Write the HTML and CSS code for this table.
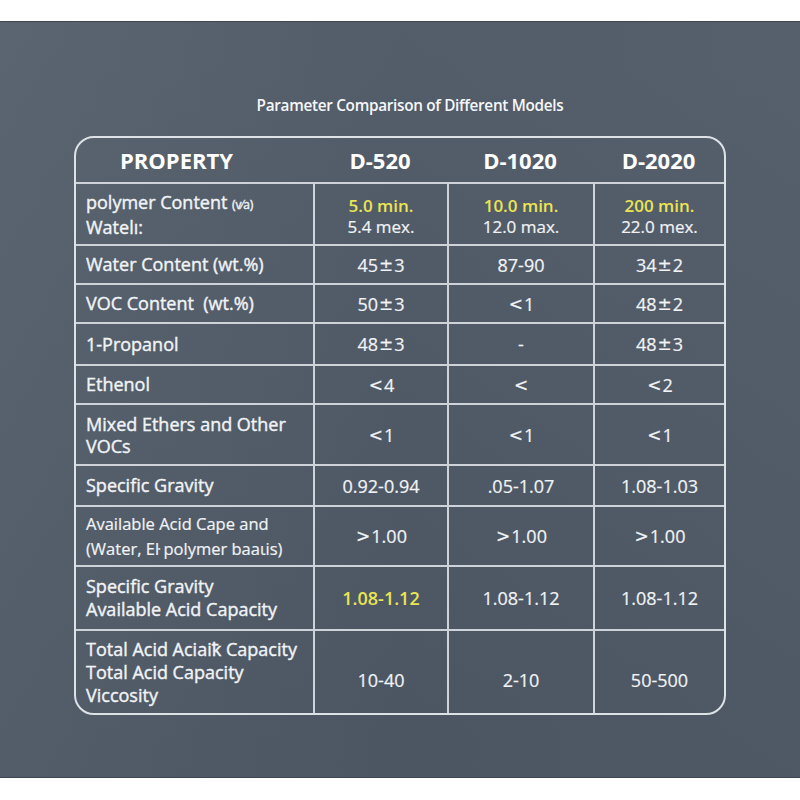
FILE: index.html
```html
<!DOCTYPE html>
<html lang="en">
<head>
<meta charset="utf-8">
<title>Parameter Comparison of Different Models</title>
<link rel="stylesheet" href="styles.css">
</head>
<body>
<main class="panel">
  <h1 class="title">Parameter Comparison of Different Models</h1>
  <div class="grid" role="table">
    <div class="cell head prop" role="columnheader">PROPERTY</div>
    <div class="cell head" role="columnheader">D-520</div>
    <div class="cell head" role="columnheader">D-1020</div>
    <div class="cell head" role="columnheader">D-2020</div>

    <div class="cell label row1"><span>polymer Content <span class="tiny">(v⁄a)</span></span><span>Watelı:</span></div>
    <div class="cell val row1 stack"><span class="hl">5.0 min.</span><span>5.4 mex.</span></div>
    <div class="cell val row1 stack"><span class="hl">10.0 min.</span><span>12.0 max.</span></div>
    <div class="cell val row1 stack"><span class="hl">200 min.</span><span>22.0 mex.</span></div>

    <div class="cell label">Water Content (wt.%)</div>
    <div class="cell val">45<span class="pm">±</span>3</div>
    <div class="cell val">87-90</div>
    <div class="cell val">34<span class="pm">±</span>2</div>

    <div class="cell label">VOC Content&nbsp; (wt.%)</div>
    <div class="cell val">50<span class="pm">±</span>3</div>
    <div class="cell val"><span class="pm">&lt;</span>1</div>
    <div class="cell val">48<span class="pm">±</span>2</div>

    <div class="cell label">1-Propanol</div>
    <div class="cell val">48<span class="pm">±</span>3</div>
    <div class="cell val">-</div>
    <div class="cell val">48<span class="pm">±</span>3</div>

    <div class="cell label">Ethenol</div>
    <div class="cell val"><span class="pm">&lt;</span>4</div>
    <div class="cell val"><span class="pm">&lt;</span></div>
    <div class="cell val"><span class="pm">&lt;</span>2</div>

    <div class="cell label tight">Mixed Ethers and Other<br>VOCs</div>
    <div class="cell val"><span class="pm">&lt;</span>1</div>
    <div class="cell val"><span class="pm">&lt;</span>1</div>
    <div class="cell val"><span class="pm">&lt;</span>1</div>

    <div class="cell label">Specific Gravity</div>
    <div class="cell val">0.92-0.94</div>
    <div class="cell val">.05-1.07</div>
    <div class="cell val">1.08-1.03</div>

    <div class="cell label thin">Available Acid Cape and<br>(Water, Eŀ polymer baaιis)</div>
    <div class="cell val"><span class="pm">&gt;</span>1.00</div>
    <div class="cell val"><span class="pm">&gt;</span>1.00</div>
    <div class="cell val"><span class="pm">&gt;</span>1.00</div>

    <div class="cell label">Specific Gravity<br>Available Acid Capacity</div>
    <div class="cell val hl">1.08-1.12</div>
    <div class="cell val">1.08-1.12</div>
    <div class="cell val">1.08-1.12</div>

    <div class="cell label">Total Acid Aciaiꝁ Capacity<br>Total Acid Capacity<br>Viccosity</div>
    <div class="cell val low">10-40</div>
    <div class="cell val low">2-10</div>
    <div class="cell val low">50-500</div>
  </div>
</main>
</body>
</html>
```

FILE: styles.css
```css
* { box-sizing: border-box; }

html, body {
  margin: 0;
  padding: 0;
  background: #ffffff;
}

body {
  font-family: "Open Sans", "Noto Sans", sans-serif;
  color: #f2f4f6;
}

.panel {
  margin-top: 21px;
  height: 757px;
  background:
    linear-gradient(180deg, rgba(255,255,255,0.03), rgba(0,0,0,0.03)),
    linear-gradient(90deg, #55606c 0%, #4e5865 50%, #515b68 100%);
  border-top: 1px solid #3e4650;
  border-bottom: 1px solid #3e4650;
  padding-top: 73px;
}

.title {
  margin: 0 0 21px;
  padding-left: 20px;
  text-align: center;
  font-family: "Open Sans", sans-serif;
  font-weight: 600;
  font-size: 15.3px;
  line-height: 20px;
  letter-spacing: -0.3px;
  color: #f6f7f8;
}

.grid {
  width: 652px;
  margin: 0 auto;
  border: 2px solid #dde2e7;
  border-radius: 20px;
  overflow: hidden;
  display: grid;
  grid-template-columns: 237px 134px 146px 131px;
  grid-template-rows: 44px 62px 39px 39px 42px 39px 61px 41px 60px 64px 84px;
}

.cell {
  display: flex;
  align-items: center;
  border-top: 2px solid #cdd3d9;
  border-left: 2px solid #cdd3d9;
}

.cell:nth-child(4n+1) { border-left: none; }

.head {
  border-top: none;
  border-left: none;
  justify-content: center;
  font-weight: 700;
  font-size: 22px;
  color: #ffffff;
}

.head.prop {
  justify-content: flex-start;
  padding-left: 44px;
}

.label {
  padding-left: 10px;
  font-weight: 400;
  font-size: 18px;
  line-height: 23px;
  color: #f1f3f5;
  -webkit-text-stroke: 0.4px #f1f3f5;
}

.label.row1 {
  flex-direction: column;
  align-items: flex-start;
  justify-content: center;
  line-height: 22px;
}

.label.tight { line-height: 22px; }

.label.thin {
  font-size: 16.5px;
  line-height: 25px;
  -webkit-text-stroke: 0.2px #f1f3f5;
}

.tiny { font-size: 12px; }

.val {
  justify-content: center;
  font-size: 18px;
  color: #f1f3f5;
  -webkit-text-stroke: 0.2px #f1f3f5;
}

.val.stack {
  flex-direction: column;
  font-size: 17px;
  line-height: 21px;
  padding-top: 4px;
}

.val.low { padding-top: 16px; }

.pm {
  font-family: "DejaVu Sans", sans-serif;
  font-size: 17px;
  margin: 0 1px;
}

.hl {
  color: #ebe453;
  font-weight: 600;
  -webkit-text-stroke: 0;
}
```
